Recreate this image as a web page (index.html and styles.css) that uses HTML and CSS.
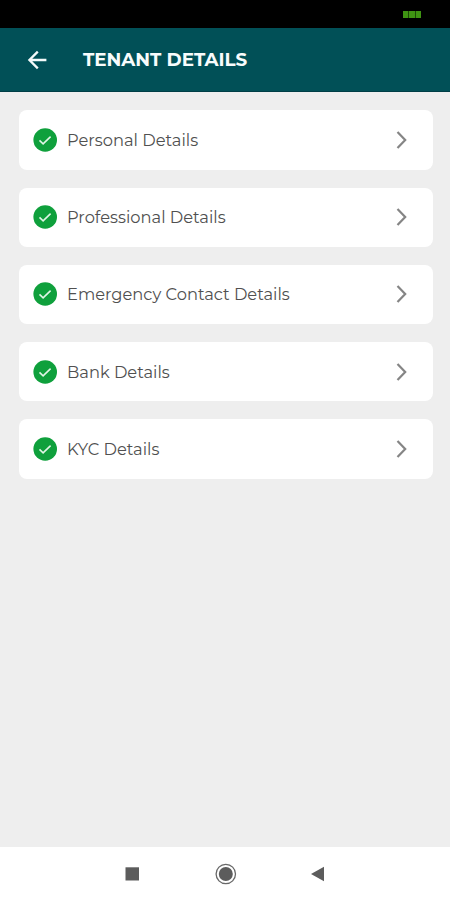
FILE: index.html
```html
<!DOCTYPE html>
<html lang="en">
<head>
<meta charset="utf-8">
<title>Tenant Details</title>
<link rel="stylesheet" href="styles.css">
</head>
<body>
<svg class="defs" width="0" height="0" aria-hidden="true">
  <symbol id="check" viewBox="0 0 24 24"><circle cx="12.2" cy="12" r="11.8" fill="#0fa03c"/><path d="M6.5 12.4l3.6 3.4 7.5-7.2" fill="none" stroke="#e0f5e5" stroke-width="1.6"/></symbol>
  <symbol id="chevron" viewBox="0 0 12 20"><path d="M1.5 2L9.2 10l-7.7 8" fill="none" stroke="#858585" stroke-width="2.2"/></symbol>
</svg>
<div class="status"><div class="battery"><i></i><i></i><i></i></div></div>
<header class="header">
  <svg class="back" viewBox="0 0 20 20"><path d="M19.4 10H2.4M10.8 1.6L2.4 10l8.4 8.4" fill="none" stroke="#f4fafa" stroke-width="2.3"/></svg>
  <h1 class="title">TENANT DETAILS</h1>
</header>
<main class="list">
  <a class="card"><svg class="check"><use href="#check"/></svg><span class="label">Personal Details</span><svg class="chevron"><use href="#chevron"/></svg></a>
  <a class="card"><svg class="check"><use href="#check"/></svg><span class="label">Professional Details</span><svg class="chevron"><use href="#chevron"/></svg></a>
  <a class="card"><svg class="check"><use href="#check"/></svg><span class="label">Emergency Contact Details</span><svg class="chevron"><use href="#chevron"/></svg></a>
  <a class="card"><svg class="check"><use href="#check"/></svg><span class="label">Bank Details</span><svg class="chevron"><use href="#chevron"/></svg></a>
  <a class="card"><svg class="check"><use href="#check"/></svg><span class="label">KYC Details</span><svg class="chevron"><use href="#chevron"/></svg></a>
</main>
<nav class="nav">
  <svg viewBox="0 0 22 22"><rect x="4.5" y="4.3" width="13.5" height="13.2" fill="#5c5c5c"/></svg>
  <svg viewBox="0 0 22 22"><circle cx="10.8" cy="11" r="9.7" fill="none" stroke="#686868" stroke-width="1.3"/><circle cx="10.8" cy="11" r="7" fill="#5c5c5c"/></svg>
  <svg viewBox="0 0 22 22"><path d="M3 11L16 3.7v14.6z" fill="#5c5c5c"/></svg>
</nav>
</body>
</html>
```

FILE: styles.css
```css
* { box-sizing: border-box; }
body {
  margin: 0;
  height: 900px;
  display: flex;
  flex-direction: column;
  background: #eee;
  font-family: Montserrat, Inter, "Open Sans", sans-serif;
  overflow: hidden;
}
.defs { position: absolute; }
.status {
  height: 28px;
  flex: none;
  display: flex;
  justify-content: flex-end;
  padding: 11px 29px 0 0;
  background: #000;
}
.battery { display: flex; gap: 1px; width: 18px; height: 7px; background: #1c4a06; }
.battery i { flex: 1; background: #3f9413; }
.header {
  height: 64px;
  flex: none;
  display: flex;
  align-items: center;
  padding-left: 27px;
  background: #015057;
  border-bottom: 1px solid #003e46;
}
.back { width: 20px; height: 20px; margin-right: 36px; }
.title {
  margin: 1px 0 0;
  color: #f8fcfc;
  font-size: 18.3px;
  line-height: 24px;
  font-weight: 700;
  white-space: nowrap;
}
.list {
  flex: 1;
  display: flex;
  flex-direction: column;
  gap: 18px;
  padding: 18.3px 17px 0 19px;
}
.card {
  height: 59.3px;
  display: flex;
  align-items: center;
  padding: 0 25px 0.6px 14px;
  border-radius: 8px;
  background: #fff;
}
.check { width: 24px; height: 24px; margin-right: 10px; }
.label {
  color: #505050;
  font-size: 16.3px;
  line-height: 22px;
  white-space: nowrap;
}
.chevron { width: 12px; height: 20px; margin-left: auto; }
.nav {
  height: 53px;
  flex: none;
  display: flex;
  align-items: center;
  gap: 71.5px;
  padding-left: 121px;
  background: #fff;
}
.nav svg { width: 22px; height: 22px; }
```
